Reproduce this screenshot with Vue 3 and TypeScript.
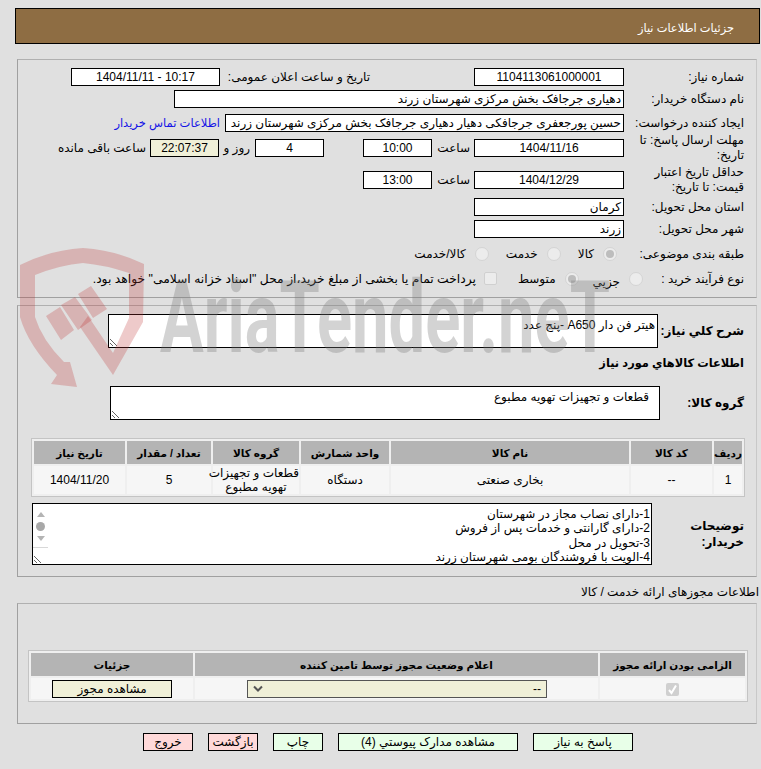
<script setup lang="ts">
import { ref } from 'vue'

interface Col { w: number; title: string }
const goodsCols: Col[] = [
  { w: 28, title: 'ردیف' }, { w: 81, title: 'کد کالا' }, { w: 238, title: 'نام کالا' },
  { w: 88, title: 'واحد شمارش' }, { w: 86, title: 'گروه کالا' }, { w: 84, title: 'تعداد / مقدار' }, { w: 91, title: 'تاریخ نیاز' },
]
const goodsRow: string[] = ['1', '--', 'بخاری صنعتی', 'دستگاه', 'قطعات و تجهیزات\nتهویه مطبوع', '5', '1404/11/20']
const permitCols: Col[] = [
  { w: 145, title: 'الزامی بودن ارائه مجوز' }, { w: 403, title: 'اعلام وضعیت مجوز توسط تامین کننده' }, { w: 162, title: 'جزئیات' },
]
const summary = ref('هیتر فن دار A650 -پنج عدد')
const groupName = ref('قطعات و تجهیزات تهویه مطبوع')
const notes = ref('1-دارای نصاب مجاز در شهرستان\n2-دارای گارانتی و خدمات پس از فروش\n3-تحویل در محل\n4-الویت با فروشندگان بومی شهرستان زرند')
const actions = [
  { label: 'پاسخ به نیاز', w: 100, tone: 'green' },
  { label: 'مشاهده مدارک پیوستي (4)', w: 180, tone: 'green' },
  { label: 'چاپ', w: 50, tone: 'green' },
  { label: 'بازگشت', w: 50, tone: 'red' },
  { label: 'خروج', w: 50, tone: 'red' },
]
</script>

<template>
  <div class="page" dir="rtl">
    <header class="title-bar">جزئیات اطلاعات نیاز</header>

    <section class="panel info">
      <div class="row r22">
        <label class="lab">شماره نیاز:</label>
        <div class="box w150 center">1104113061000001</div>
        <label class="lab pub">تاریخ و ساعت اعلان عمومی:</label>
        <div class="box w149 center" dir="ltr">1404/11/11 - 10:17</div>
      </div>
      <div class="row r22">
        <label class="lab">نام دستگاه خریدار:</label>
        <div class="box w450">دهیاری جرجافک بخش مرکزی شهرستان زرند</div>
      </div>
      <div class="row r25">
        <label class="lab">ایجاد کننده درخواست:</label>
        <div class="box w400 nowrap">حسین پورجعفری جرجافکی دهیار دهیاری جرجافک بخش مرکزی شهرستان زرند</div>
        <a class="link">اطلاعات تماس خریدار</a>
      </div>
      <div class="row r26">
        <label class="lab two">مهلت ارسال پاسخ: تا تاریخ:</label>
        <div class="box w150 center">1404/11/16</div>
        <span class="tag">ساعت</span>
        <div class="box w70 center">10:00</div>
        <div class="box w70 center days">4</div>
        <span class="tag t-days">روز و</span>
        <div class="box w70 center beige">22:07:37</div>
        <span class="tag t-left">ساعت باقی مانده</span>
      </div>
      <div class="row r38">
        <label class="lab two">حداقل تاریخ اعتبار قیمت: تا تاریخ:</label>
        <div class="box w150 center">1404/12/29</div>
        <span class="tag">ساعت</span>
        <div class="box w70 center">13:00</div>
      </div>
      <div class="row r16">
        <label class="lab">استان محل تحویل:</label>
        <div class="box w150">کرمان</div>
      </div>
      <div class="row r27">
        <label class="lab">شهر محل تحویل:</label>
        <div class="box w150">زرند</div>
      </div>
      <div class="row r24 options">
        <label class="lab lab-kind">طبقه بندی موضوعی:</label>
        <span class="radio on"></span><span class="opt">کالا</span>
        <span class="radio"></span><span class="opt">خدمت</span>
        <span class="radio"></span><span class="opt">کالا/خدمت</span>
      </div>
      <div class="row r25 options">
        <label class="lab lab-buy">نوع فرآیند خرید :</label>
        <span class="radio"></span><span class="opt o-small">جزیي</span>
        <span class="radio on"></span><span class="opt o-mid">متوسط</span>
        <span class="check"></span><span class="opt o-pay">پرداخت تمام یا بخشی از مبلغ خرید،از محل "اسناد خزانه اسلامی" خواهد بود.</span>
      </div>
    </section>

    <section class="panel goods">
      <div class="row-area">
        <label class="lab bold col99">شرح کلي نیاز:</label>
        <textarea class="area first-area" readonly :value="summary"></textarea>
      </div>
      <h3 class="lab bold heading">اطلاعات کالاهاي مورد نیاز</h3>
      <div class="row-area">
        <label class="lab bold col97">گروه کالا:</label>
        <textarea class="area inset" readonly :value="groupName"></textarea>
      </div>
      <table class="grid goods-grid">
        <colgroup><col v-for="c in goodsCols" :key="c.title" :style="{ width: c.w + 'px' }" /></colgroup>
        <thead><tr><th v-for="c in goodsCols" :key="c.title">{{ c.title }}</th></tr></thead>
        <tbody><tr><td v-for="(v, i) in goodsRow" :key="i">{{ v }}</td></tr></tbody>
      </table>
      <div class="row-area notes">
        <label class="lab bold col105">توضیحات خریدار:</label>
        <div class="notes-box">
          <textarea class="area notes-text" readonly :value="notes"></textarea>
          <div class="fake-scroll">
            <span class="arrow up"></span>
            <span class="thumb"></span>
            <span class="arrow down"></span>
          </div>
        </div>
      </div>
    </section>

    <p class="permits-title">اطلاعات مجوزهای ارائه خدمت / کالا</p>

    <section class="panel permits">
      <table class="grid permit-grid">
        <colgroup><col v-for="c in permitCols" :key="c.title" :style="{ width: c.w + 'px' }" /></colgroup>
        <thead><tr><th v-for="c in permitCols" :key="c.title">{{ c.title }}</th></tr></thead>
        <tbody>
          <tr>
            <td>
              <span class="tick">
                <svg viewBox="0 0 13 13" width="13" height="13"><path d="M3 7l2.5 3L10 2.5" fill="none" stroke="#fff" stroke-width="2" /></svg>
              </span>
            </td>
            <td>
              <div class="select">
                <span>--</span>
                <svg viewBox="0 0 10 8" width="10" height="8"><path d="M1 1.5l4 4 4-4" fill="none" stroke="#555" stroke-width="2" /></svg>
              </div>
            </td>
            <td><button class="btn view">مشاهده مجوز</button></td>
          </tr>
        </tbody>
      </table>
    </section>

    <nav class="actions">
      <button v-for="a in actions" :key="a.label" class="btn" :class="a.tone" :style="{ width: a.w + 'px' }">{{ a.label }}</button>
    </nav>

    <svg class="watermark" viewBox="0 0 761 769" width="761" height="769" aria-hidden="true">
      <path class="wm-red" fill-rule="evenodd" d="M20 265 Q50 250 83 248 Q115 250 144 264 L143 322 L113 375 L80 327 L88 316 L113 353 L129 318 L129 273 Q105 265 83 263 Q60 265 35 275 L35 317 Q42 340 64 362 L70 362 L77 387 L51 384 L57 375 Q28 345 20 317 Z" />
      <path class="wm-red" d="M46 316 L60 307 L74 330 L61 340 Z M61 305 L75 297 L92 320 L78 330 Z M78 294 L91 286 L107 309 L93 318 Z" />
      <text class="wm-text" x="160" y="352" textLength="450" lengthAdjust="spacingAndGlyphs">AriaTender.neT</text>
    </svg>
  </div>
</template>

<style>
html, body { background: #e0e0e0; margin: 0; }
</style>

<style scoped>
.page {
  position: relative;
  width: 761px;
  height: 769px;
  overflow: hidden;
  background: #e0e0e0;
  color: #000;
  font: 12px "Liberation Sans", "DejaVu Sans", sans-serif;
  box-sizing: border-box;
  padding-top: 8px;
}
.title-bar {
  box-sizing: border-box;
  height: 36px;
  margin: 0 1px 0 15px;
  padding: 3px 25px 0;
  display: flex;
  align-items: center;
  background: #8e6d43;
  border: 1px solid #000;
  color: #fff;
  font-size: 11.4px;
}
.panel {
  box-sizing: border-box;
  margin: 0 4px 0 17px;
  border: 1px solid #a0a0a0;
  border-right-color: #c8c8c8;
  border-top-color: #b0b0b0;
}
.info { margin-top: 15px; height: 239px; padding: 6px 0 0; }
.row { display: flex; align-items: center; }
.r22 { height: 22px; }
.r25 { height: 25px; }
.r26 { height: 26px; }
.r38 { height: 38px; }
.r16 { height: 16px; }
.r27 { height: 27px; }
.r24 { height: 24px; }
.lab {
  box-sizing: border-box;
  flex: none;
  width: 132px;
  padding-right: 12px;
  line-height: 22px;
  font-weight: 400;
}
.two { line-height: 15px; }
.bold { font-weight: 700; }
.box {
  box-sizing: border-box;
  flex: none;
  height: 18px;
  line-height: 16px;
  padding: 0 2px;
  border: 1px solid #000;
  background: #fff;
  overflow: hidden;
}
.center { text-align: center; }
.nowrap { white-space: nowrap; }
.w150 { width: 150px; }
.w149 { width: 149px; }
.w450 { width: 450px; }
.w400 { width: 399px; }
.w70 { width: 69px; }
.beige { background: #f0f0d8; }
.days { margin-right: 39px; }
.pub { width: 254px; padding-right: 104px; white-space: nowrap; }
.tag { flex: none; width: 42px; padding-right: 4px; box-sizing: border-box; }
.t-days { width: 36px; padding-right: 5px; white-space: nowrap; }
.t-left { width: auto; padding-right: 4px; white-space: nowrap; }
.link { color: #1414e6; margin-right: 5px; white-space: nowrap; font-size: 11.5px; }
.options .radio, .options .check { flex: none; box-sizing: border-box; }
.radio {
  width: 14px;
  height: 14px;
  border-radius: 50%;
  border: 1px solid #d4d4d4;
  background: #ececec;
  display: inline-flex;
  align-items: center;
  justify-content: center;
}
.radio.on::after { content: ""; width: 8px; height: 8px; border-radius: 50%; background: #bdbdbd; }
.check { width: 13px; height: 13px; border: 1px solid #d0d0d0; background: #ececec; border-radius: 2px; }
.opt { padding-right: 9px; padding-left: 17px; white-space: nowrap; }
.o-small { padding-left: 14px; position: relative; top: 3px; }
.o-mid { padding-left: 21px; }
.o-pay { padding: 0 8px 0 0; font-size: 12.3px; }
.lab-kind { width: 139px; }
.lab-buy { width: 113px; }
.goods { margin-top: 7px; height: 272px; padding-top: 8px; }
.row-area { display: flex; align-items: center; }
.col99 { width: 98px; }
.col97 { width: 96px; }
.col105 { width: 104px; line-height: 16px; }
.area {
  box-sizing: border-box;
  display: block;
  width: 550px;
  height: 34px;
  margin: 0;
  padding: 2px;
  border: 1px solid #000;
  border-radius: 0;
  background: #fff;
  color: #000;
  font: inherit;
  outline: none;
  resize: both;
  overflow: hidden;
}
.first-area { padding-top: 3px; }
.inset { padding: 3px 10px; }
.heading { height: 30px; width: auto; margin: 0; line-height: 30px; font-size: 11.4px; }
.heading + .row-area { margin-top: 8px; }
.grid {
  table-layout: fixed;
  border-collapse: separate;
  border-spacing: 2px;
  border: 1px solid #c4c4c4;
  background: #efefef;
}
.grid th { background: #b4b4b4; font-size: 10.5px; font-weight: 700; height: 23px; padding: 0; text-align: center; }
.grid td { background: #f6f6f6; padding: 0; text-align: center; line-height: 14px; white-space: pre; }
.goods-grid { margin: 18px 11px 0 0; width: 714px; }
.goods-grid td { height: 28px; }
.notes { margin-top: 6px; }
.notes-box { position: relative; width: 620px; height: 62px; }
.notes-text { width: 620px; height: 62px; line-height: 14.3px; padding: 3px 1px; white-space: pre-wrap; }
.fake-scroll {
  position: absolute;
  left: 1px;
  top: 1px;
  bottom: 17px;
  width: 15px;
  display: flex;
  flex-direction: column;
  align-items: center;
  justify-content: space-between;
  padding-top: 8px;
  box-sizing: border-box;
  border-bottom: 1px solid #d8d8d8;
  padding-bottom: 6px;
}
.arrow { width: 0; height: 0; border-left: 4px solid transparent; border-right: 4px solid transparent; }
.up { border-bottom: 5px solid #b4b4b4; }
.down { border-top: 5px solid #b4b4b4; }
.thumb { width: 9px; height: 9px; border-radius: 50%; background: #a8a8a8; }
.permits-title { margin: 0; height: 26px; padding: 8px 2px 0 0; box-sizing: border-box; line-height: 14px; }
.permits { height: 121px; padding-top: 46px; margin-top: 0; }
.permit-grid { margin: 0 8px 0 0; width: 720px; }
.permit-grid td { height: 21px; padding: 0; }
.tick {
  display: inline-flex;
  width: 13px;
  height: 13px;
  border-radius: 2px;
  background: #d0d0d0;
  vertical-align: middle;
}
.select {
  box-sizing: border-box;
  width: 300px;
  height: 18px;
  margin-right: 51px;
  padding: 0 5px;
  display: flex;
  align-items: center;
  justify-content: space-between;
  border: 1px solid #555;
  background: #f0f0d8;
}
.btn {
  box-sizing: border-box;
  height: 18px;
  padding: 0;
  border: 1px solid #000;
  border-radius: 0;
  font: inherit;
  color: #000;
  cursor: pointer;
}
.view { width: 120px; background: #f0f0d8; display: block; margin: 0 auto; }
.actions { display: flex; gap: 15px; margin: 9px 128px 0 0; }
.green { background: #e8ffe8; }
.red { background: #ffd9d9; }
.watermark { position: absolute; left: 0; top: 0; pointer-events: none; }
.wm-red { fill: rgba(190, 50, 50, 0.26); }
.wm-text { font: 700 100px Roboto, "Liberation Sans", sans-serif; fill: rgba(120, 120, 120, 0.33); direction: ltr; }
</style>
